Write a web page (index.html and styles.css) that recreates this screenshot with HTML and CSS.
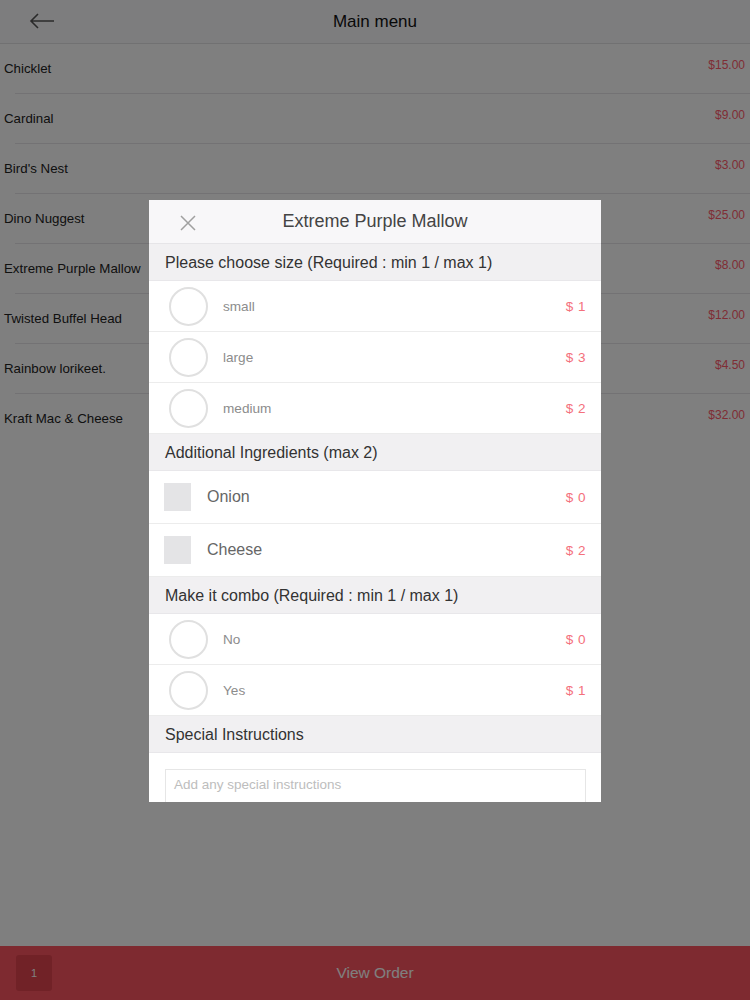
FILE: index.html
```html
<!DOCTYPE html>
<html lang="en">
<head>
  <meta charset="UTF-8">
  <title>Main menu</title>
  <link rel="stylesheet" href="styles.css">
</head>
<body>
  <div class="app">
    <header class="topbar">
      <span class="back">
        <svg width="26" height="16" viewBox="0 0 26 16"><path d="M25 8H2M9 1L2 8l7 7" fill="none" stroke="#555" stroke-width="1.6"/></svg>
      </span>
      <h1>Main menu</h1>
    </header>

    <ul class="menu">
      <li><span>Chicklet</span><span class="price">$15.00</span></li>
      <li><span>Cardinal</span><span class="price">$9.00</span></li>
      <li><span>Bird's Nest</span><span class="price">$3.00</span></li>
      <li><span>Dino Nuggest</span><span class="price">$25.00</span></li>
      <li><span>Extreme Purple Mallow</span><span class="price">$8.00</span></li>
      <li><span>Twisted Buffel Head</span><span class="price">$12.00</span></li>
      <li><span>Rainbow lorikeet.</span><span class="price">$4.50</span></li>
      <li><span>Kraft Mac &amp; Cheese</span><span class="price">$32.00</span></li>
    </ul>

    <footer class="orderbar">
      <span class="count">1</span>
      <span class="view">View Order</span>
    </footer>
  </div>

  <div class="backdrop">
    <div class="modal">
      <div class="modal-head">
        <span class="close">
          <svg width="16" height="16" viewBox="0 0 16 16"><path d="M1 1l14 14M15 1L1 15" stroke="#a0a0a0" stroke-width="1.5"/></svg>
        </span>
        <h2>Extreme Purple Mallow</h2>
      </div>

      <div class="section">Please choose size (Required : min 1 / max 1)</div>
      <div class="option"><span class="radio"></span><span class="label">small</span><span class="cost">$ 1</span></div>
      <div class="option"><span class="radio"></span><span class="label">large</span><span class="cost">$ 3</span></div>
      <div class="option"><span class="radio"></span><span class="label">medium</span><span class="cost">$ 2</span></div>

      <div class="section">Additional Ingredients (max 2)</div>
      <div class="option check"><span class="box"></span><span class="label">Onion</span><span class="cost">$ 0</span></div>
      <div class="option check"><span class="box"></span><span class="label">Cheese</span><span class="cost">$ 2</span></div>

      <div class="section">Make it combo (Required : min 1 / max 1)</div>
      <div class="option"><span class="radio"></span><span class="label">No</span><span class="cost">$ 0</span></div>
      <div class="option"><span class="radio"></span><span class="label">Yes</span><span class="cost">$ 1</span></div>

      <div class="section">Special Instructions</div>
      <div class="notes">
        <textarea placeholder="Add any special instructions"></textarea>
      </div>
    </div>
  </div>
</body>
</html>
```

FILE: styles.css
```css
body {
  margin: 0;
  font-family: "Liberation Sans", Arial, sans-serif;
  background: #fff;
}
.app {
  height: 1000px;
  display: flex;
  flex-direction: column;
}
.topbar {
  height: 43px;
  border-bottom: 1px solid #e2e2e4;
  background: #fbfafc;
  display: flex;
  align-items: center;
  justify-content: center;
  position: relative;
}
.topbar h1 {
  margin: 0;
  font-size: 17px;
  font-weight: normal;
  color: #111;
}
.back {
  position: absolute;
  left: 29px;
  top: 13px;
}
.menu {
  list-style: none;
  margin: 0;
  padding: 0;
  flex: 1;
}
.menu li {
  height: 49px;
  margin-left: 15px;
  padding: 0 5px 0 0;
  border-bottom: 1px solid #e6e4e8;
  display: flex;
  justify-content: space-between;
  align-items: center;
  font-size: 13.3px;
  color: #222;
}
.menu li span:first-child {
  margin-left: -11px;
}
.menu li .price {
  font-size: 12px;
  color: #ff5a6a;
  margin-top: -8px;
}
.menu li:last-child {
  border-bottom: none;
}
.orderbar {
  height: 54px;
  background: #fd5561;
  display: flex;
  align-items: center;
  position: relative;
}
.count {
  width: 36px;
  height: 36px;
  margin-left: 16px;
  border-radius: 3px;
  background: #e2444f;
  color: #fff;
  font-size: 11px;
  display: flex;
  align-items: center;
  justify-content: center;
}
.view {
  position: absolute;
  left: 0;
  right: 0;
  text-align: center;
  font-size: 15.5px;
  color: #fff;
  pointer-events: none;
}

.backdrop {
  position: fixed;
  inset: 0;
  background: rgba(0, 0, 0, 0.5);
  display: flex;
  align-items: center;
  justify-content: center;
}
.modal {
  width: 452px;
  height: 602px;
  margin-top: 2px;
  background: #fff;
  overflow: hidden;
}
.modal-head {
  height: 43px;
  background: #f8f7f9;
  border-bottom: 1px solid #e6e5e8;
  display: flex;
  align-items: center;
  justify-content: center;
  position: relative;
}
.modal-head h2 {
  margin: 0;
  font-size: 18px;
  font-weight: normal;
  color: #444;
}
.close {
  position: absolute;
  left: 31px;
  top: 15px;
}
.section {
  height: 36px;
  line-height: 37px;
  padding-left: 16px;
  background: #f1f0f2;
  border-bottom: 1px solid #e8e7ea;
  font-size: 16px;
  color: #333;
}
.option {
  height: 50px;
  border-bottom: 1px solid #ececec;
  display: flex;
  align-items: center;
  padding: 0 15px 0 20px;
}
.radio {
  width: 35px;
  height: 35px;
  border: 2px solid #e0e0e0;
  border-radius: 50%;
}
.option .label {
  margin-left: 15px;
  font-size: 13.6px;
  color: #8c8c8c;
  flex: 1;
}
.cost {
  font-size: 13.5px;
  color: #f4707c;
  letter-spacing: 0.5px;
}
.option.check {
  height: 52px;
  padding-left: 15px;
}
.box {
  width: 27px;
  height: 28px;
  background: #e4e4e6;
}
.option.check .label {
  margin-left: 16px;
  font-size: 16px;
  color: #666;
}
.notes {
  padding: 16px 15px 0 16px;
}
.notes textarea {
  display: block;
  width: 100%;
  box-sizing: border-box;
  height: 70px;
  border: 1px solid #e6e6e6;
  padding: 7px 8px;
  font-family: "Liberation Sans", Arial, sans-serif;
  font-size: 13.5px;
  resize: none;
}
.notes textarea::placeholder {
  color: #bdbdbd;
}
```
